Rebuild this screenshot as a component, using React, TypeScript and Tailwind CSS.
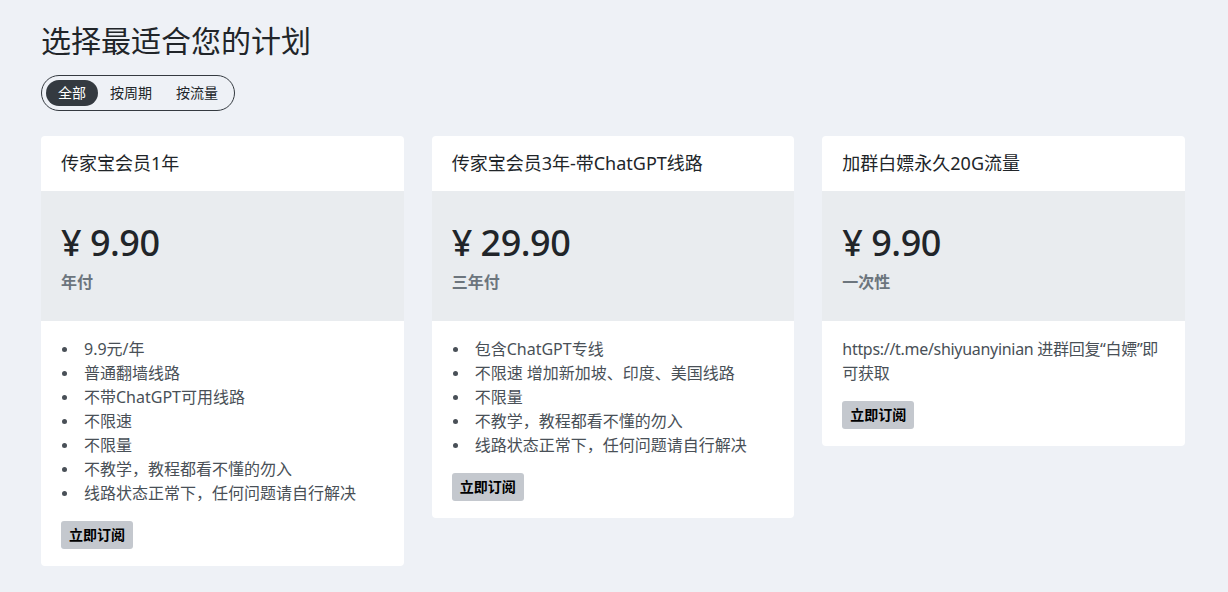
import React from 'react';

interface Plan {
  name: string;
  price: string;
  period: string;
  features?: string[];
  note?: string;
}

const plans: Plan[] = [
  {
    name: '传家宝会员1年',
    price: '¥ 9.90',
    period: '年付',
    features: [
      '9.9元/年',
      '普通翻墙线路',
      '不带ChatGPT可用线路',
      '不限速',
      '不限量',
      '不教学，教程都看不懂的勿入',
      '线路状态正常下，任何问题请自行解决',
    ],
  },
  {
    name: '传家宝会员3年-带ChatGPT线路',
    price: '¥ 29.90',
    period: '三年付',
    features: [
      '包含ChatGPT专线',
      '不限速 增加新加坡、印度、美国线路',
      '不限量',
      '不教学，教程都看不懂的勿入',
      '线路状态正常下，任何问题请自行解决',
    ],
  },
  {
    name: '加群白嫖永久20G流量',
    price: '¥ 9.90',
    period: '一次性',
    note: 'https://t.me/shiyuanyinian 进群回复“白嫖”即可获取',
  },
];

const tabs = ['全部', '按周期', '按流量'];

export default function App() {
  const [active, setActive] = React.useState(0);

  return (
    <div className="min-h-screen bg-[#eef1f6] px-[41px] pt-[21px] font-['Noto_Sans','Noto_Sans_CJK_SC',sans-serif] text-[#212529]">
      <h1 className="text-[30px] leading-[40px] font-normal">选择最适合您的计划</h1>

      {/* filter pills */}
      <div className="mt-[14px] inline-flex items-center rounded-full border border-[#343a40] p-[4px]">
        {tabs.map((t, i) => (
          <button
            key={t}
            onClick={() => setActive(i)}
            className={
              i === active
                ? 'h-[26px] rounded-full bg-[#343a40] px-[12px] text-[14px] leading-[26px] text-white'
                : 'h-[26px] rounded-full px-[12px] text-[14px] leading-[26px] text-[#212529]'
            }
          >
            {t}
          </button>
        ))}
      </div>

      <div className="mt-[25px] grid w-[1144px] grid-cols-3 items-start gap-[28px]">
        {plans.map((plan) => (
          <div key={plan.name} className="overflow-hidden rounded-[4px] bg-white">
            <div className="flex h-[55px] items-center px-5 text-[18px]">{plan.name}</div>

            <div className="h-[130px] bg-[#e9ecef] px-5 pt-[30px]">
              <div className="text-[36px] leading-[44px] font-medium tracking-[-0.5px]">{plan.price}</div>
              <div className="mt-[5px] text-[16px] leading-[24px] font-semibold text-[#6c757d]">{plan.period}</div>
            </div>

            <div className="px-5 pt-[16px] pb-[17px] text-[16px] leading-[24px] text-[#495057]">
              {plan.features && (
                <ul>
                  {plan.features.map((f) => (
                    <li key={f} className="flex items-center">
                      <span className="flex w-[23px] shrink-0 pl-[1px]">
                        <span className="h-[5px] w-[5px] rounded-full bg-[#495057]" />
                      </span>
                      {f}
                    </li>
                  ))}
                </ul>
              )}
              {plan.note && <p className="tracking-[-0.3px]">{plan.note}</p>}
              <button className="mt-[16px] h-[28px] rounded-[3px] bg-[#c4c8ce] px-2 text-[14px] font-bold text-black">
                立即订阅
              </button>
            </div>
          </div>
        ))}
      </div>
    </div>
  );
}
